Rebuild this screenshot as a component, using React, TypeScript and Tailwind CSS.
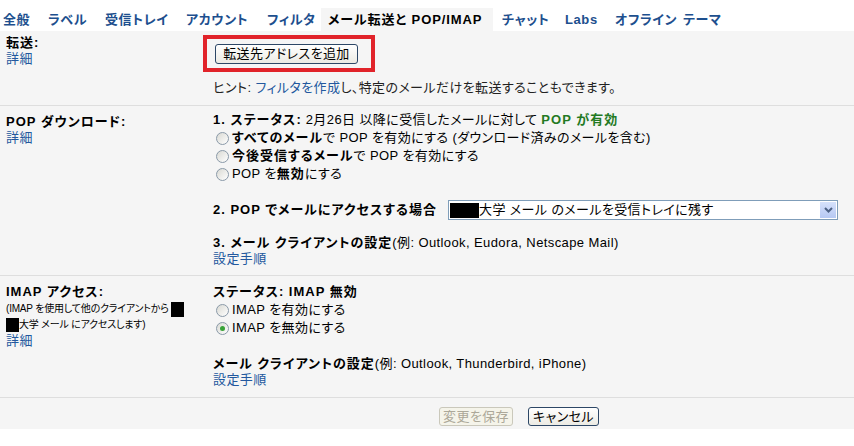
import React from 'react';

const link = 'text-[#22589e]';

function B({ children, className = '' }: { children: React.ReactNode; className?: string }) {
    return <b className={`font-bold tracking-[1px] ${className}`}>{children}</b>;
}

function Radio({ checked }: { checked?: boolean }) {
    return (
        <span className="inline-flex items-center justify-center w-[13px] h-[13px] rounded-full border border-[#8a99a8] bg-linear-to-br from-[#d9d9d3] to-white shrink-0 ml-[3px] mr-[3px]">
            {checked && <span className="w-[5px] h-[5px] rounded-full bg-[#38a238]" />}
        </span>
    );
}

const tabs: [string, string][] = [
    ['全般', 'w-[45px]'],
    ['ラベル', 'w-[57px]'],
    ['受信トレイ', 'w-[81px]'],
    ['アカウント', 'w-[81px]'],
    ['フィルタ', 'w-[54px]'],
];

const tabsAfter: [string, string][] = [
    ['チャット', 'w-[63px] ml-[9px]'],
    ['Labs', 'w-[50px]'],
    ['オフライン', 'w-[68px]'],
    ['テーマ', 'w-[60px]'],
];

export default function App() {
    return (
        <div className="w-[854px] h-[446px] bg-white text-[13px] tracking-[0.4px] text-black font-['Liberation_Sans','Noto_Sans_CJK_JP',sans-serif] [font-feature-settings:'palt'] overflow-hidden">
            {/* tabs */}
            <div className="flex items-end h-[31px] pl-[3px] font-bold tracking-[0.6px]">
                {tabs.map(([label, w]) => (
                    <div key={label} className={`${w} h-[23px] leading-[23px] text-[#1d4f8e] whitespace-nowrap`}>{label}</div>
                ))}
                <div className="w-[172px] h-[23px] leading-[23px] pl-[7px] bg-[#f5f5f5] whitespace-nowrap tracking-[0.9px]">メール転送と POP/IMAP</div>
                {tabsAfter.map(([label, w]) => (
                    <div key={label} className={`${w} h-[23px] leading-[23px] text-[#1d4f8e] whitespace-nowrap`}>{label}</div>
                ))}
            </div>

            <div className="bg-[#f5f5f5]">
                {/* forwarding */}
                <div className="flex border-b border-[#dedede]">
                    <div className="w-[213px] pl-[6px] pt-[4px] leading-4">
                        <div><B>転送:</B></div>
                        <div className={link}>詳細</div>
                    </div>
                    <div className="flex-1 pt-[4px] pb-[9px]">
                        <div className="-ml-[10px] w-[172px] h-[37px] border-4 border-[#e1232a] pl-[8px] pt-[5px]">
                            <button className="w-[143px] h-[20px] rounded-[3px] border border-[#2d4766] bg-linear-to-b from-white to-[#ecebe4] text-[13px] leading-[18px]">
                                転送先アドレスを追加
                            </button>
                        </div>
                        <div className="mt-[8px] leading-4 text-[#222]">
                            ヒント: <span className={link}>フィルタを作成</span>し、特定のメールだけを転送することもできます。
                        </div>
                    </div>
                </div>

                {/* POP */}
                <div className="flex border-b border-[#dedede]">
                    <div className="w-[213px] pl-[6px] pt-[8px] leading-4">
                        <div><B>POP ダウンロード:</B></div>
                        <div className={link}>詳細</div>
                    </div>
                    <div className="flex-1 pt-[5px] pb-[8px]">
                        <div className="leading-[18px] whitespace-nowrap">
                            <div><B>1. ステータス:</B> 2月26日 以降に受信したメールに対して <B className="text-[#237a23]">POP が有効</B></div>
                            <div className="flex items-center"><Radio /><span><B>すべてのメール</B>で POP を有効にする (ダウンロード済みのメールを含む)</span></div>
                            <div className="flex items-center"><Radio /><span><B>今後受信するメール</B>で POP を有効にする</span></div>
                            <div className="flex items-center"><Radio /><span>POP を<B>無効</B>にする</span></div>
                        </div>
                        <div className="mt-[17px] h-[20px] flex items-center">
                            <div className="w-[235px] whitespace-nowrap"><B>2. POP でメールにアクセスする場合</B></div>
                            <div className="w-[390px] h-[20px] border border-[#7f9db9] bg-white flex items-center pl-[1px] pr-[1px]">
                                <span className="w-[29px] h-[15px] bg-black shrink-0" />
                                <span className="flex-1 leading-4 whitespace-nowrap">大学 メール のメールを受信トレイに残す</span>
                                <span className="w-[16px] h-[16px] bg-linear-to-b from-[#d6e1fb] to-[#b6c8f3] flex items-center justify-center">
                                    <svg width="9" height="6" viewBox="0 0 9 6"><path d="M1 1 L4.5 4.5 L8 1" stroke="#4d6185" strokeWidth="2" fill="none" /></svg>
                                </span>
                            </div>
                        </div>
                        <div className="mt-[15px] leading-4 whitespace-nowrap">
                            <div><B>3. メール クライアントの設定</B>(例: Outlook, Eudora, Netscape Mail)</div>
                            <div className={link}>設定手順</div>
                        </div>
                    </div>
                </div>

                {/* IMAP */}
                <div className="flex border-b border-[#dedede]">
                    <div className="w-[213px] pl-[6px] pt-[8px] leading-4">
                        <div><B>IMAP アクセス:</B></div>
                        <div className="mt-[1px] text-[10px] tracking-[-0.2px] leading-4 whitespace-nowrap">
                            <div>(IMAP を使用して他のクライアントから <span className="inline-block w-[13px] h-[15px] bg-black align-middle" /></div>
                            <div><span className="inline-block w-[13px] h-[14px] bg-black align-middle" />大学 メール にアクセスします)</div>
                        </div>
                        <div className={link}>詳細</div>
                    </div>
                    <div className="flex-1 pt-[7px] pb-[9px]">
                        <div className="leading-[18px]">
                            <div><B>ステータス: IMAP 無効</B></div>
                            <div className="flex items-center"><Radio /><span>IMAP を有効にする</span></div>
                            <div className="flex items-center"><Radio checked /><span>IMAP を無効にする</span></div>
                        </div>
                        <div className="mt-[19px] leading-4 whitespace-nowrap">
                            <div><B>メール クライアントの設定</B>(例: Outlook, Thunderbird, iPhone)</div>
                            <div className={link}>設定手順</div>
                        </div>
                    </div>
                </div>

                {/* footer */}
                <div className="flex pt-[9px] pb-[3px] pl-[439px] gap-[15px]">
                    <button disabled className="w-[74px] h-[19px] rounded-[3px] border border-[#cac8bb] bg-[#f5f4ea] text-[#aca899] text-[13px] leading-[17px]">変更を保存</button>
                    <button className="w-[71px] h-[19px] rounded-[3px] border border-[#2d4766] bg-linear-to-b from-white to-[#ecebe4] text-[13px] leading-[17px]">キャンセル</button>
                </div>
            </div>
        </div>
    );
}
